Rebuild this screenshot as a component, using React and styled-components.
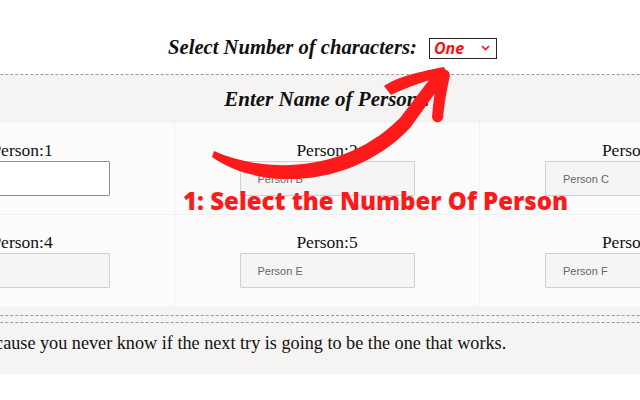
import styled, { createGlobalStyle } from "styled-components"

const GlobalStyle = createGlobalStyle`
  html, body {
    margin: 0;
    padding: 0;
    background: #ffffff;
    overflow: hidden;
  }
`

const people = [
  { id: 1, placeholder: "", first: true },
  { id: 2, placeholder: "Person B" },
  { id: 3, placeholder: "Person C" },
  { id: 4, placeholder: "" },
  { id: 5, placeholder: "Person E" },
  { id: 6, placeholder: "Person F" },
]

const App = () => {
  return (
    <Stage>
      <GlobalStyle />
      <Page>
        <Header>
          <Title>Select Number of characters:</Title>
          <Picker>
            <span>One</span>
            <svg width="9" height="6" viewBox="0 0 9 6">
              <path d="M1 1 L4.5 4.5 L8 1" fill="none" stroke="#ff1010" strokeWidth="1.6" />
            </svg>
          </Picker>
        </Header>

        <SectionHead>
          <Heading>Enter Name of Person :</Heading>
        </SectionHead>

        <Grid>
          {people.map((p) => (
            <Cell key={p.id}>
              <Label>Person:{p.id}</Label>
              <NameInput $active={p.first} placeholder={p.placeholder} readOnly />
            </Cell>
          ))}
        </Grid>

        <Footer>
          <Rule />
          <Rule />
          <Quote>Keep trying because you never know if the next try is going to be the one that works.</Quote>
        </Footer>
      </Page>

      {/* annotation */}
      <Arrow width="640" height="400" viewBox="0 0 640 400">
        <path
          d="M212 157 C260 191 352 189 410 128 L446 78 L436 71 L400 118 C345 173 265 174 214 151 Z"
          fill="#fd1a1a"
        />
        <path d="M384 86 C396 78 412 73 444 67 L448 75 C428 80 410 86 391 95 Z" fill="#fd1a1a" />
        <path d="M442 69 C450 70 451 74 449 80 C446 94 444 106 443 118 C441 124 433 124 432 117 C433 104 435 90 437 76 Z" fill="#fd1a1a" />
      </Arrow>
      <Callout>1: Select the Number Of Person</Callout>
    </Stage>
  )
}

const Stage = styled.div`
  position: relative;
  width: 640px;
  height: 400px;
  overflow: hidden;
`

const Page = styled.div`
  width: 915px;
  margin-left: -130px;
`

const Header = styled.header`
  height: 75px;
  display: flex;
  align-items: center;
  justify-content: center;
  gap: 12px;
  padding-left: 10px;
  box-sizing: border-box;
  padding-top: 20px;
  border-bottom: 1px dashed #9a9a9a;
`

const Title = styled.h1`
  margin: 0;
  font-family: "Liberation Serif", serif;
  font-style: italic;
  font-weight: bold;
  font-size: 20.6px;
  color: #111;
`

const Picker = styled.div`
  width: 68px;
  height: 21px;
  box-sizing: border-box;
  border: 1px solid #222;
  display: flex;
  align-items: center;
  justify-content: space-between;
  padding: 0 6px 0 4px;
  margin-top: 2px;

  span {
    font-family: "Open Sans", "Liberation Sans", sans-serif;
    font-weight: bold;
    font-style: italic;
    font-size: 16px;
    color: #ff1010;
  }
`

const SectionHead = styled.div`
  background: #f5f4f2;
  height: 48px;
  display: flex;
  align-items: center;
  justify-content: center;
`

const Heading = styled.h2`
  margin: 0;
  font-family: "Liberation Serif", serif;
  font-style: italic;
  font-weight: bold;
  font-size: 21px;
  color: #111;
`

const Grid = styled.div`
  display: grid;
  grid-template-columns: repeat(3, 1fr);
  background: #fcfcfc;
`

const Cell = styled.div`
  display: flex;
  flex-direction: column;
  align-items: center;
  padding: 17px 0 18px;
  border-right: 1px solid #f1f1f1;
  border-bottom: 1px solid #f1f1f1;

  &:nth-child(3n) {
    border-right: none;
  }
  &:nth-child(n + 4) {
    border-bottom: none;
  }
`

const Label = styled.div`
  font-family: "Liberation Serif", serif;
  font-size: 17.5px;
  line-height: 20px;
  color: #111;
  margin-bottom: 1px;
`

const NameInput = styled.input`
  width: 175px;
  height: 35px;
  box-sizing: border-box;
  border: 1px solid ${(p) => (p.$active ? "#8f8f8f" : "#d0d0d0")};
  background: ${(p) => (p.$active ? "#ffffff" : "#f5f5f5")};
  border-radius: 1px;
  padding: 0 0 0 17px;
  font-family: "Liberation Sans", Arial, sans-serif;
  font-size: 11px;
  outline: none;

  &::placeholder {
    color: #666;
  }
`

const Footer = styled.footer`
  background: #f5f4f2;
  padding-top: 9px;
  height: 68px;
  box-sizing: border-box;
`

const Rule = styled.div`
  border-top: 1px dashed #9a9a9a;
  margin-bottom: 6px;
`

const Quote = styled.p`
  margin: 9px 0 0;
  padding-left: 17px;
  font-family: "Liberation Serif", serif;
  font-size: 18.2px;
  line-height: 22px;
  color: #111;
`

const Arrow = styled.svg`
  position: absolute;
  left: 0;
  top: 0;
  pointer-events: none;
`

const Callout = styled.div`
  position: absolute;
  left: 183px;
  top: 186px;
  font-family: "Open Sans", sans-serif;
  font-weight: 800;
  font-size: 24px;
  line-height: 30px;
  color: #fd1a1a;
  white-space: nowrap;
`

export default App
